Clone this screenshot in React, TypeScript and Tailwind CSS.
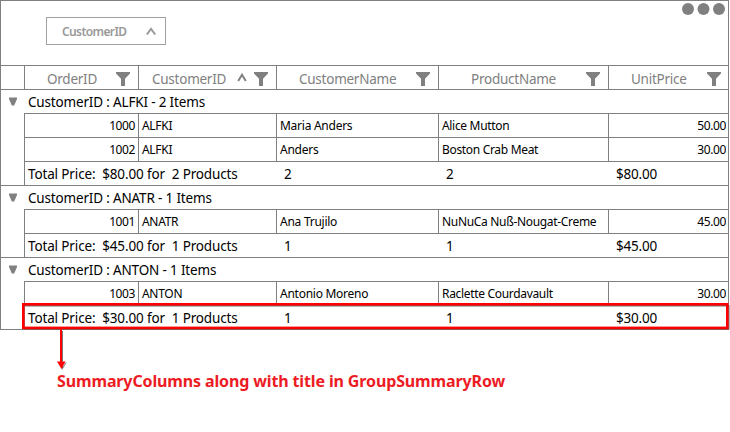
import React from "react";

const FUNNEL = "M0 0H14V1.5L9 6.8V14H5V6.8L0 1.5Z";

function Funnel() {
  return (
    <svg width="14" height="14" viewBox="0 0 14 14" className="mt-0.5 shrink-0">
      <path d={FUNNEL} fill="#808080" />
    </svg>
  );
}

const COLS = "grid grid-cols-[114px_138px_162px_170px_120px]";
const HEAD = "flex items-center border-l border-[#808080] whitespace-nowrap text-[13.5px] tracking-[-0.25px] text-[#808080]";
const CELL = "border-l border-[#808080] pl-[3px] whitespace-nowrap text-[12px] leading-6";

type Row = { id: string; customer: string; name: string; product: string; price: string };
type Group = { key: string; count: number; total: string; rows: Row[] };

const GROUPS: Group[] = [
  {
    key: "ALFKI",
    count: 2,
    total: "$80.00",
    rows: [
      { id: "1000", customer: "ALFKI", name: "Maria Anders", product: "Alice Mutton", price: "50.00" },
      { id: "1002", customer: "ALFKI", name: "Anders", product: "Boston Crab Meat", price: "30.00" },
    ],
  },
  {
    key: "ANATR",
    count: 1,
    total: "$45.00",
    rows: [{ id: "1001", customer: "ANATR", name: "Ana Trujilo", product: "NuNuCa Nuß-Nougat-Creme", price: "45.00" }],
  },
  {
    key: "ANTON",
    count: 1,
    total: "$30.00",
    rows: [{ id: "1003", customer: "ANTON", name: "Antonio Moreno", product: "Raclette Courdavault", price: "30.00" }],
  },
];

function GroupBlock({ group }: { group: Group }) {
  return (
    <section className="border-b border-[#808080]">
      <div className="flex h-[23px] items-center">
        <svg width="8" height="9" viewBox="0 0 8 9" className="ml-2 mr-[11px]">
          <path d="M0 0.500H8V2L5.200 8.500H2.800L0 2Z" fill="#808080" />
        </svg>
        <span className="whitespace-pre pt-0.5 text-[13.5px] leading-[23px] tracking-[-0.17px]">
          CustomerID : {group.key} - {group.count} Items
        </span>
      </div>
      <div className="ml-[23px]">
        {group.rows.map((r) => (
          <div key={r.id} className={`${COLS} h-6 border-t border-[#808080]`}>
            <div className={`${CELL} pr-[3px] text-right tracking-[-0.4px]`}>{r.id}</div>
            <div className={`${CELL} tracking-[-0.3px]`}>{r.customer}</div>
            <div className={`${CELL} tracking-[-0.26px]`}>{r.name}</div>
            <div className={`${CELL} tracking-[-0.32px]`}>{r.product}</div>
            <div className={`${CELL} pr-[2px] text-right tracking-[-0.4px]`}>{r.price}</div>
          </div>
        ))}
        <div className="grid h-6 grid-cols-[252px_162px_170px_120px] border-l border-t border-[#808080] text-[13.5px] leading-[25px] tracking-[-0.22px]">
          <div className="whitespace-pre pl-[3px] tracking-[-0.14px]">
            Total Price:{"  "}{group.total} for{"  "}{group.count} Products
          </div>
          <div className="pl-[7px]">{group.count}</div>
          <div className="pl-[7px]">{group.count}</div>
          <div className="pl-[7px]">{group.total}</div>
        </div>
      </div>
    </section>
  );
}

export default function App() {
  return (
    <main className="relative h-[432px] w-[730px] overflow-hidden bg-white font-['Noto_Sans',sans-serif] text-black">
      <div className="w-[729px] border-l border-r border-t border-[#808080]">
        <div className="flex h-16 justify-between">
          <div className="ml-[45px] mt-4 flex h-7 w-[120px] items-center border border-[#a0a0a0] pl-[15px]">
            <span className="w-[84px] pt-0.5 text-[12px] font-semibold tracking-[-0.6px] text-[#999999]">CustomerID</span>
            <svg width="10" height="9" viewBox="0 0 10 9" className="shrink-0">
              <path d="M0.8 7.500L5 2L9.200 7.500" fill="none" stroke="#999999" strokeWidth="2" />
            </svg>
          </div>
          <svg width="48" height="16" viewBox="0 0 48 16">
            <circle cx="8" cy="8" r="6" fill="#808080" />
            <circle cx="23.5" cy="8" r="6" fill="#808080" />
            <circle cx="39" cy="8" r="6" fill="#808080" />
          </svg>
        </div>
        <header className="h-[25px] border-y border-[#808080] pl-[23px]">
          <div className={`${COLS} h-full`}>
            <div className={`${HEAD} pl-[22px]`}><span className="w-[69px] pt-[3px]">OrderID</span><Funnel /></div>
            <div className={`${HEAD} pl-[13px]`}>
              <span className="w-[85px] pt-[3px]">CustomerID</span>
              <svg width="10" height="9" viewBox="0 0 10 9" className="shrink-0">
                <path d="M1.200 8L5 1.800L8.800 8" fill="none" stroke="#808080" strokeWidth="2" />
              </svg>
              <span className="ml-[7px]"><Funnel /></span>
            </div>
            <div className={`${HEAD} pl-[22px]`}><span className="w-[117px] pt-[3px]">CustomerName</span><Funnel /></div>
            <div className={`${HEAD} pl-[32px]`}><span className="w-[115px] pt-[3px]">ProductName</span><Funnel /></div>
            <div className={`${HEAD} pl-[22px]`}><span className="w-[76px] pt-[3px]">UnitPrice</span><Funnel /></div>
          </div>
        </header>
        {GROUPS.map((g) => <GroupBlock key={g.key} group={g} />)}
      </div>
      <p className="ml-[57px] mt-[39px] whitespace-nowrap text-[16px] font-bold leading-6 tracking-[-0.13px] text-[#ed1c24]">
        SummaryColumns along with title in GroupSummaryRow
      </p>
      <svg className="absolute left-0 top-[300px]" width="730" height="72" viewBox="0 0 730 72">
        <path d="M25 6H726M25 29.500H729V5" fill="none" stroke="#707070" strokeWidth="1" />
        <rect x="23.300" y="4.300" width="704" height="23.600" fill="none" stroke="#ff0000" strokeWidth="2.600" />
        <path d="M62.500 31V68" stroke="#777777" strokeWidth="1" />
        <path d="M62 69.500L66 62.500" stroke="#777777" strokeWidth="1" />
        <path d="M61 29V65" stroke="#ff0000" strokeWidth="2" />
        <path d="M57 61.500H65.500L61.500 69Z" fill="#ff0000" />
      </svg>
    </main>
  );
}
